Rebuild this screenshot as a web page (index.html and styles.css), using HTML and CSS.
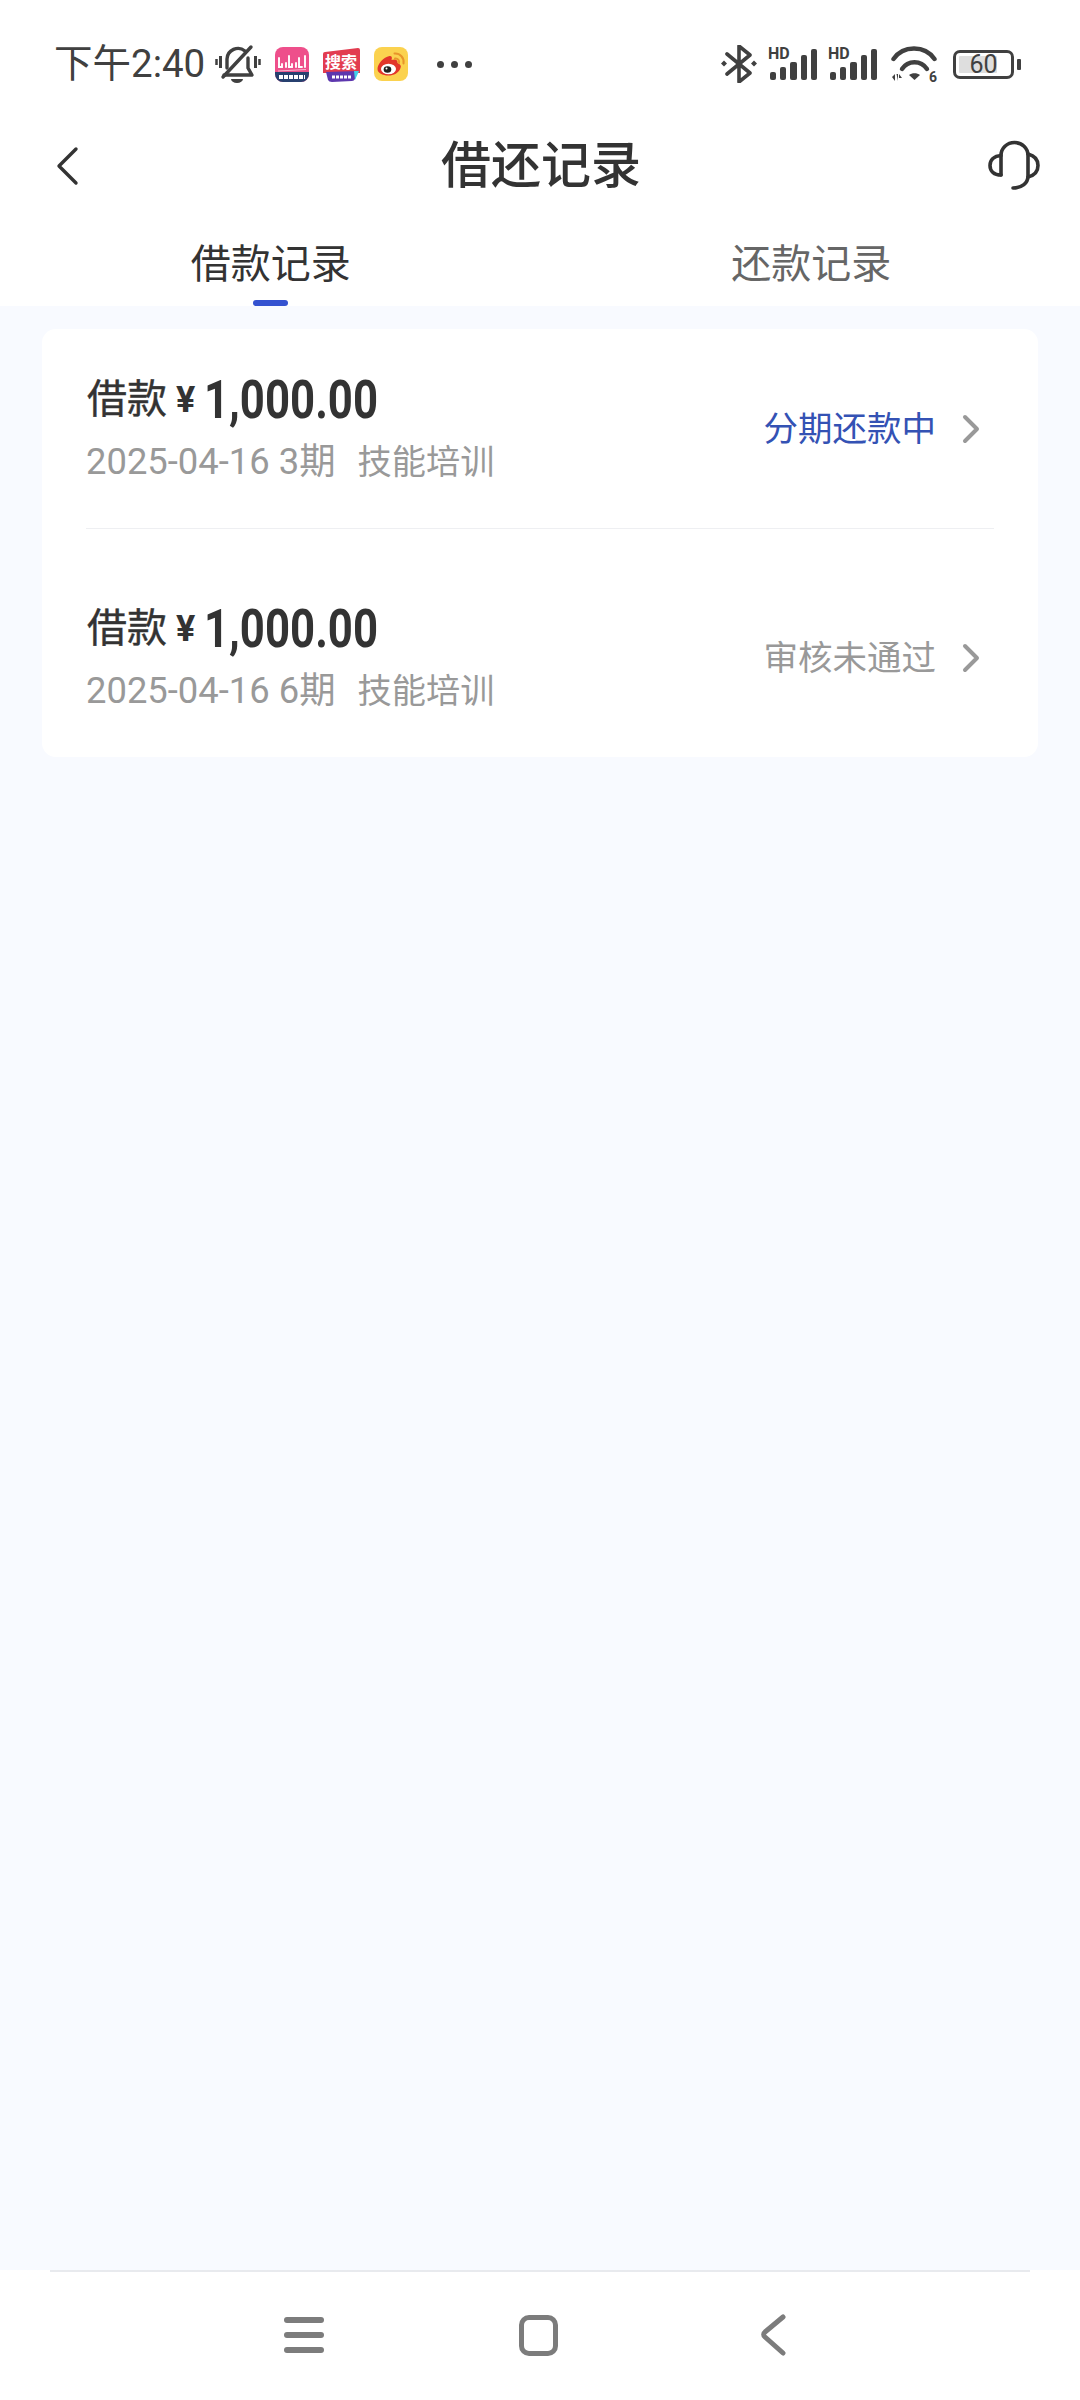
FILE: index.html
```html
<!DOCTYPE html>
<html lang="zh">
<head>
<meta charset="utf-8">
<title>借还记录</title>
<link rel="stylesheet" href="styles.css">
</head>
<body>
<div class="page">
  <div class="top">
    <div class="status">
      <div class="status-left">
        <span class="time">下午2:40</span>
        <svg class="ic-bell" viewBox="0 0 46 40"><g fill="none" stroke="#404040" stroke-width="3.400" stroke-linecap="round" stroke-linejoin="round"><path d="M12 24V15a11 11 0 0 1 18-8"/><path d="M33 14V24l4 7H9"/><path d="M8 33L36 3"/><path d="M5.500 12v12M40.500 12v12" stroke-width="3" stroke-linecap="butt"/><path d="M1.500 15v6M44.500 15v6" stroke-width="2.500" stroke-linecap="butt"/></g><path d="M16 35h12a6 4 0 0 1-12 0z" fill="#404040"/></svg>
        <svg class="ic-app ic-bili" viewBox="0 0 34 35"><rect width="34" height="35" rx="8" fill="#ee4f8b"/><path d="M0 25h34v2a8 8 0 0 1-8 8H8a8 8 0 0 1-8-8z" fill="#27406f"/><path d="M3 24l28-1.500" stroke="#f9b7cf" stroke-width="1"/><g fill="none" stroke="#fff" stroke-width="1.900" stroke-linecap="round"><path d="M4 11v9h3v-3"/><path d="M11 16v4M14 9v11h3v-3"/><path d="M21 16v4M24 11v9h3"/><path d="M30 9v11"/></g><path d="M4 30h26" stroke="#fff" stroke-width="4" stroke-dasharray="4 1"/></svg>
        <svg class="ic-app ic-search" viewBox="0 0 37 35"><path d="M0 7q0-2 2-2L35 1q2 0 2 2v23L0 26z" fill="#e23c50"/><path d="M3 25l32-1-3 8q-1 2-3 2L9 35q-3 0-4-2z" fill="#5d37ae"/><path d="M31 24h5l-4 9z" fill="#41cfe8"/><text x="18" y="21" class="app-text">搜索</text><path d="M9 30h19" stroke="#fff" stroke-width="3" stroke-dasharray="3 1"/></svg>
        <svg class="ic-app ic-weibo" viewBox="0 0 34 34"><rect width="34" height="34" rx="8" fill="#fbd24f"/><path d="M3.500 22c0-5 6-12 12-13 3-.5 2.500 3 2 4 4-1.500 6.500 0 6 3 3 1 4 3 3 5-1.500 5-7 7.500-12 7.500-6 0-11-2.500-11-6.500z" fill="#e2352a"/><ellipse cx="14.500" cy="22" rx="7.500" ry="5.300" fill="#fff"/><ellipse cx="13.500" cy="22.500" rx="3.800" ry="3.300" fill="#222"/><circle cx="12.500" cy="21.500" r="1" fill="#fff"/><path d="M20.500 6.500a8.500 8.500 0 0 1 9 10M21 11.500a3.500 3.500 0 0 1 4 4.500" fill="none" stroke="#e8952b" stroke-width="2" stroke-linecap="round"/></svg>
        <span class="dots"><i></i><i></i><i></i></span>
      </div>
      <div class="status-right">
        <svg class="ic-bt" viewBox="0 0 36 38"><path d="M6 9l23 19-11 9V1l11 9L6 29" fill="none" stroke="#404040" stroke-width="3.600" stroke-linejoin="round" stroke-linecap="round"/><path d="M3 15.500l3 3-3 3-3-3zM33 15.500l3 3-3 3-3-3z" fill="#404040"/></svg>
        <div class="signal">
          <span class="hd">HD</span>
          <i class="b1"></i><i class="b2"></i><i class="b3"></i><i class="b4"></i><i class="b5"></i>
        </div>
        <div class="signal">
          <span class="hd">HD</span>
          <i class="b1"></i><i class="b2"></i><i class="b3"></i><i class="b4"></i><i class="b5"></i>
        </div>
        <div class="wifi">
          <svg class="ic-wifi" viewBox="0 0 46 36"><g fill="none" stroke="#404040" stroke-linecap="round"><path d="M2.500 13C12-1 34-1 43.500 13" stroke-width="4.400"/><path d="M11 23c6-9 19-9 25 0" stroke-width="4.400"/></g><path d="M18 29c3-2.500 8-2.500 11 0l-5.500 5z" fill="#404040"/><path d="M1 31l3-3v7zM5.500 28h1.500v7zM8 28l3 4H8z" fill="#404040"/></svg>
          <span class="six">6</span>
        </div>
        <div class="battery-wrap">
          <div class="battery"><span class="level"></span><span class="pct">60</span></div>
          <i class="cap"></i>
        </div>
      </div>
    </div>
    <header class="nav">
      <svg class="ic-back" viewBox="0 0 24 40"><path d="M21 3L4 20l17 17" fill="none" stroke="#333" stroke-width="3.400" stroke-linecap="round" stroke-linejoin="round"/></svg>
      <h1 class="title">借还记录</h1>
      <svg class="ic-service" viewBox="0 0 52 52"><g fill="none" stroke="#333" stroke-width="3.600" stroke-linecap="round" stroke-linejoin="round"><path d="M13 35V15.500a13.500 13 0 0 1 27 0V36c0 7-6 12-15 12"/><path d="M13 15.500C6 16 2 20 2 25.500S6 35 13 35"/><path d="M40 14c6 1.500 10 5.500 10 11.500s-4 10-10 11.500"/></g></svg>
    </header>
    <div class="tabs">
      <div class="tab active">借款记录<span class="ink"></span></div>
      <div class="tab">还款记录</div>
    </div>
  </div>
  <main class="main">
    <section class="card">
      <div class="row">
        <div class="info">
          <div class="amount"><span class="lbl">借款</span><span class="yen">¥</span><span class="num">1,000.00</span></div>
          <div class="meta"><span class="date">2025-04-16 3期</span><span>技能培训</span></div>
        </div>
        <div class="state blue">分期还款中</div>
        <svg class="chev" viewBox="0 0 18 30"><path d="M3 3l12 12L3 27" fill="none" stroke="#999" stroke-width="4" stroke-linecap="round" stroke-linejoin="round"/></svg>
      </div>
      <div class="row">
        <div class="info">
          <div class="amount"><span class="lbl">借款</span><span class="yen">¥</span><span class="num">1,000.00</span></div>
          <div class="meta"><span class="date">2025-04-16 6期</span><span>技能培训</span></div>
        </div>
        <div class="state">审核未通过</div>
        <svg class="chev" viewBox="0 0 18 30"><path d="M3 3l12 12L3 27" fill="none" stroke="#999" stroke-width="4" stroke-linecap="round" stroke-linejoin="round"/></svg>
      </div>
    </section>
  </main>
  <footer class="sysnav">
    <div class="menu"><i></i><i></i><i></i></div>
    <div class="home"></div>
    <svg class="sys-back" viewBox="0 0 26 42"><path d="M23 3L5 18a3 3 0 0 0 0 5l18 16" fill="none" stroke="#7c7c7c" stroke-width="5" stroke-linecap="round" stroke-linejoin="round"/></svg>
  </footer>
</div>
</body>
</html>
```
FILE: styles.css
```css
* { box-sizing: border-box; }
html, body { margin: 0; padding: 0; }
body { font-family: "Roboto", "Noto Sans CJK SC", sans-serif; color: #333; background: #fff; }
.page { width: 1080px; height: 2400px; display: flex; flex-direction: column; overflow: hidden; }
.top { background: #fff; height: 306px; flex: none; display: flex; flex-direction: column; }

.status { height: 128px; display: flex; justify-content: space-between; align-items: center; padding: 0 59px 0 54px; flex: none; }
.status-left, .status-right { display: flex; align-items: center; }
.time { font-size: 38.500px; color: #404040; line-height: 44px; }
.ic-bell { width: 46px; height: 40px; margin-left: 10px; }
.ic-bili { width: 34px; height: 35px; margin-left: 14px; }
.ic-search { width: 37px; height: 35px; margin-left: 14px; }
.ic-weibo { width: 34px; height: 34px; margin-left: 14px; }
.app-text { font-family: "Noto Sans CJK SC", sans-serif; font-size: 16px; fill: #fff; text-anchor: middle; font-weight: 700; }
.dots { display: flex; gap: 7px; margin-left: 29px; }
.dots i { width: 7px; height: 7px; border-radius: 50%; background: #404040; }

.ic-bt { width: 36px; height: 38px; }
.signal { position: relative; width: 47px; height: 32px; margin-left: 13px; display: flex; align-items: flex-end; gap: 4px; }
.signal i { width: 6.200px; background: #404040; border-radius: 2px; }
.signal .b1 { height: 8px; }
.signal .b2 { height: 13px; }
.signal .b3 { height: 18px; }
.signal .b4 { height: 25px; }
.signal .b5 { height: 31px; }
.hd { position: absolute; left: -2px; top: -2px; font: 700 16px/16px "Roboto", sans-serif; color: #404040; }
.wifi { position: relative; width: 46px; height: 36px; margin-left: 14px; }
.ic-wifi { display: block; width: 46px; height: 36px; }
.six { position: absolute; right: 0; top: 25px; font: 700 14px/12px "Roboto", sans-serif; color: #404040; }
.battery-wrap { display: flex; align-items: center; gap: 3px; margin-left: 16px; }
.battery { position: relative; width: 61px; height: 29px; border: 3px solid #404040; border-radius: 7px; display: flex; align-items: center; justify-content: center; }
.level { position: absolute; left: 3px; top: 3px; bottom: 3px; width: 38px; background: #dedede; border-radius: 1px; }
.pct { position: relative; font: 400 25px/23px "Roboto", sans-serif; color: #404040; }
.cap { width: 4px; height: 11px; background: #404040; border-radius: 1px; }

.nav { height: 76px; display: flex; align-items: center; justify-content: space-between; padding: 0 40px 0 55px; flex: none; position: relative; }
.ic-back { width: 24px; height: 40px; }
.title { margin: 0; font-size: 50px; font-weight: 500; color: #333; line-height: 60px; position: absolute; left: 2px; right: 0; text-align: center; }
.ic-service { width: 52px; height: 52px; }

.tabs { display: grid; grid-template-columns: 1fr 1fr; flex: 1; padding: 0 0 0 1px; }
.tab { position: relative; font-size: 40px; line-height: 56px; text-align: center; padding-top: 33px; color: #666; }
.tab.active { color: #333; }
.tab + .tab { padding-left: 2px; }
.ink { position: absolute; left: 50%; bottom: 0; width: 35px; height: 6px; margin-left: -18px; border-radius: 3px; background: #3452d0; }

.main { flex: 1; background: #f8faff; padding: 23px 42px 0; }
.card { background: #fff; border-radius: 14px; height: 428px; padding: 0 44px; display: flex; flex-direction: column; }
.row { height: 200px; display: flex; align-items: center; flex: none; padding-top: 1px; }
.row:first-child { border-bottom: 1px solid #eeeff2; }
.row + .row { height: 228px; padding-top: 30px; }
.info { flex: 1; display: flex; flex-direction: column; }
.amount { display: flex; align-items: center; height: 52px; color: #333; }
.lbl { font-size: 40px; line-height: 50px; font-weight: 400; -webkit-text-stroke: .4px #333; margin-left: 1px; }
.yen { font: 700 36px/50px "Roboto", sans-serif; margin-left: 9px; }
.num { font: 700 54px/52px "Roboto", sans-serif; margin-left: 9px; transform: scaleX(.81); transform-origin: left center; }
.meta { display: flex; gap: 22px; font-size: 34.200px; line-height: 46px; color: #999; margin-top: 13px; align-items: baseline; }
.date { font-size: 36.400px; }
.state { font-size: 34.500px; line-height: 48px; color: #999; white-space: nowrap; }
.state.blue { color: #3452b4; }
.chev { width: 18px; height: 30px; margin-left: 26px; margin-right: 14px; }

.sysnav { height: 130px; flex: none; background: #fff; position: relative; display: flex; align-items: center; padding: 0 0 0 284px; }
.sysnav::before { content: ""; position: absolute; left: 50px; right: 50px; top: 0; height: 2px; background: #e8eaee; }
.menu { width: 40px; display: flex; flex-direction: column; gap: 9px; }
.menu i { height: 6px; border-radius: 3px; background: #7c7c7c; }
.home { width: 39px; height: 41px; border: 5px solid #7c7c7c; border-radius: 10px; margin-left: 195px; }
.sys-back { width: 26px; height: 42px; margin-left: 202px; }
```
